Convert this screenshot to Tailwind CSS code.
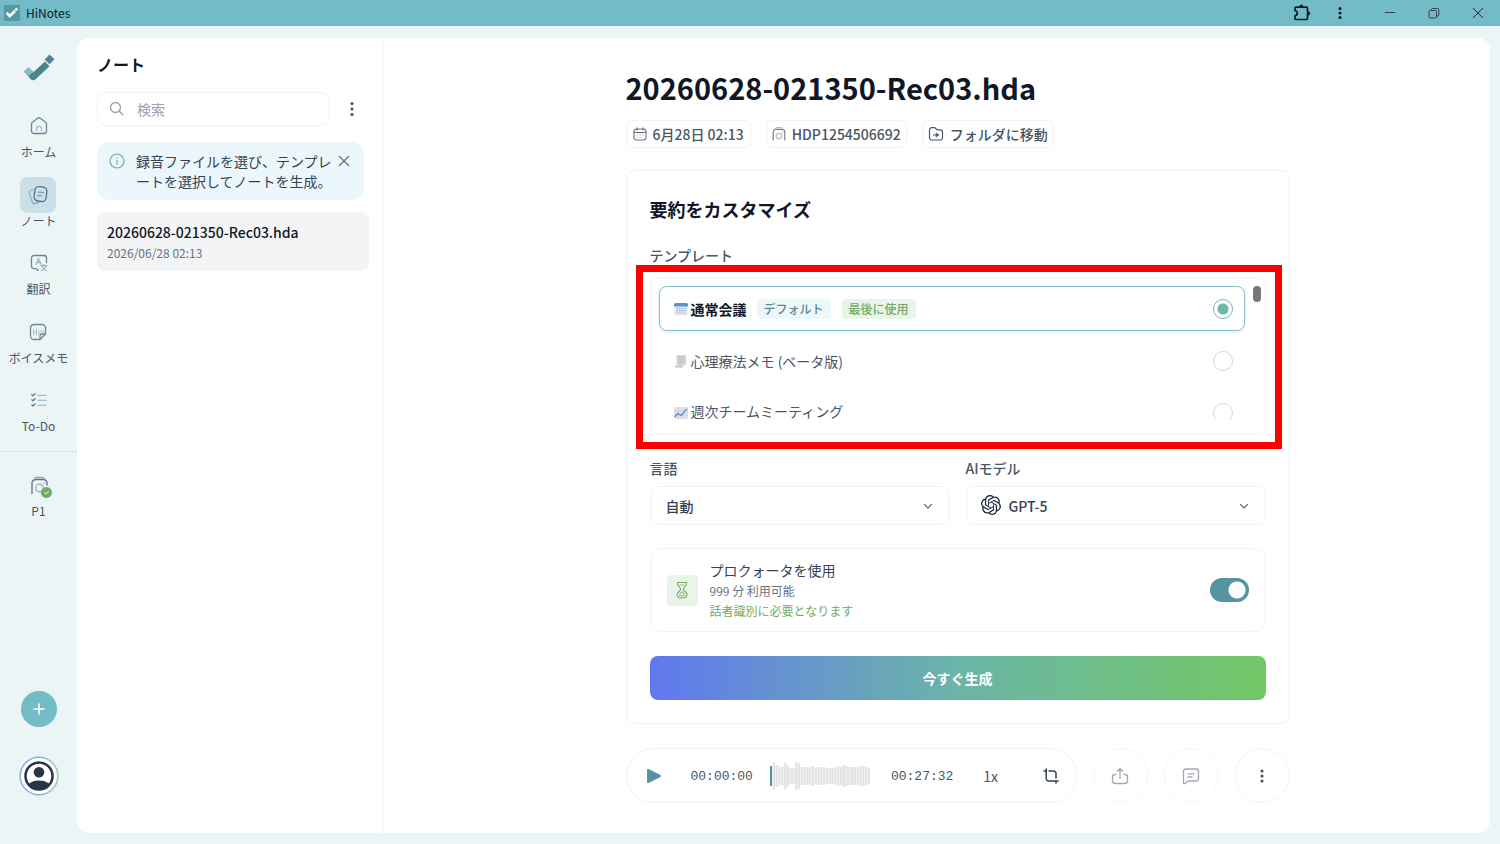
<!DOCTYPE html>
<html lang="ja">
<head>
    <meta charset="UTF-8">
    <meta name="viewport" content="width=device-width, initial-scale=1.0">
    <title>HiNotes</title>
    <script src="https://cdn.jsdelivr.net/npm/@tailwindcss/browser@4"></script>
</head>
<body class="min-h-screen flex flex-col bg-[#ebf5f6] font-['Noto_Sans_CJK_JP',sans-serif] text-sm text-gray-700">
    <!-- Title bar -->
    <header class="h-[26px] shrink-0 bg-[#73bcc7] flex items-center pl-1 pr-3 text-gray-900">
        <svg class="w-4 h-4" viewBox="0 0 16 16"><rect width="16" height="16" rx="1" fill="#5597a4"/><path d="M2.5 7.8l3.300 3.200L11 6" fill="none" stroke="#fff" stroke-width="2.600"/><path d="M11.300 5.300l2-2" stroke="#fff" stroke-width="2.600"/></svg>
        <span class="ml-[6px] text-xs">HiNotes</span>
        <div class="ml-auto flex items-center">
            <button aria-label="拡張機能" class="w-5 h-5 flex items-center justify-center"><svg class="w-5 h-5" viewBox="0 0 20 20" fill="none" stroke="#101828" stroke-width="1.700" stroke-linejoin="round"><path d="M4 4.200h10.500a1 1 0 011 1v10.300a1 1 0 01-1 1H4a1 1 0 01-1-1v-2.700c1.500-.3 2.300-1.200 2.300-2.500S4.500 8 3 7.700V5.200a1 1 0 011-1z"/><path d="M7.700 3.700a1.700 1.700 0 013.400 0zM16 8.700a1.700 1.700 0 010 3.400z" fill="#101828" stroke-width="1"/></svg></button>
            <button aria-label="メニュー" class="ml-[18px] w-5 h-5 flex items-center justify-center"><svg class="w-4 h-4" viewBox="0 0 16 16" fill="#101828"><circle cx="8" cy="3.500" r="1.500"/><circle cx="8" cy="8" r="1.500"/><circle cx="8" cy="12.500" r="1.500"/></svg></button>
            <button aria-label="最小化" class="ml-[30px] w-5 h-5 flex items-center justify-center"><svg class="w-3 h-3" viewBox="0 0 12 12" stroke="#344054"><path d="M1 5.500h10"/></svg></button>
            <button aria-label="元に戻す" class="ml-6 w-5 h-5 flex items-center justify-center"><svg class="w-3 h-3" viewBox="0 0 12 12" fill="none" stroke="#344054"><rect x="1" y="3.500" width="7.500" height="7.500" rx="1"/><path d="M3.500 3.500v-1a1 1 0 011-1H9.500a1.300 1.300 0 011.300 1.300V8a1 1 0 01-1 1H8.500"/></svg></button>
            <button aria-label="閉じる" class="ml-6 w-5 h-5 flex items-center justify-center"><svg class="w-3 h-3" viewBox="0 0 12 12" stroke="#1d2939"><path d="M1 1l10 10M11 1L1 11"/></svg></button>
        </div>
    </header>

    <div class="flex-1 flex">
        <!-- Side rail -->
        <nav class="w-[77px] shrink-0 flex flex-col items-center text-xs leading-4 text-gray-600">
            <svg class="mt-[28px] w-8 h-7" viewBox="0 0 32 28"><path d="M.500 17.500L5.500 13l6 5.500-4.500 6z" fill="#8fb9c2"/><path d="M5.500 21.500L9.500 19 22 7.500l4.500 4.800L13 25a4 4 0 01-5.500 0z" fill="#4d8490"/><path d="M26.500 0.500l5 4.700-5 5-4.800-4.700z" fill="#4d8490"/></svg>
            <a href="#" class="mt-[26px] h-[69px] flex flex-col items-center">
                <span class="w-9 h-9 flex items-center justify-center">
                    <svg class="w-[18px] h-[18px]" viewBox="0 0 18 18" fill="none" stroke="#6b8597" stroke-width="1.300" stroke-linejoin="round" stroke-linecap="round"><path d="M1.500 7.200a2.500 2.500 0 011-2L7.700 1.300a2 2 0 012.600 0l5.200 3.900a2.500 2.500 0 011 2V14a2.500 2.500 0 01-2.500 2.500H4A2.500 2.500 0 011.500 14z"/><path d="M6.500 13.500v-1.700a2.500 2.500 0 015 0v1.700" stroke="#9db9c4"/></svg>
                </span>
                <span>ホーム</span>
            </a>
            <a href="#" class="h-[68px] flex flex-col items-center">
                <span class="w-9 h-9 rounded-lg bg-[#cbe0e6] flex items-center justify-center">
                    <svg class="w-5 h-5" viewBox="0 0 20 20" fill="none" stroke-width="1.300" stroke-linecap="round"><path d="M4.800 4.700L2.500 5.500A2 2 0 001.300 8l2.800 8.700a2.500 2.500 0 003 1.700l3.400-.9" stroke="#8fb0bf"/><rect x="6.500" y="1.800" width="12" height="14.500" rx="4" transform="rotate(7 12.500 9)" stroke="#53718a"/><path d="M10.500 7.200l5 .4M10 10.500l3.500.3" stroke="#7e9dae"/></svg>
                </span>
                <span>ノート</span>
            </a>
            <a href="#" class="h-[69px] flex flex-col items-center">
                <span class="w-9 h-9 flex items-center justify-center">
                    <svg class="w-[18px] h-[18px]" viewBox="0 0 18 18" fill="none" stroke="#6b8597" stroke-width="1.300" stroke-linecap="round" stroke-linejoin="round"><path d="M8 16.500l-1.800-1.800H4A2.500 2.500 0 011.500 12V4A2.500 2.500 0 014 1.500h10A2.500 2.500 0 0116.500 4v4.500"/><path d="M6 10.500l2.500-6 2.500 6M7 8.500h3" stroke="#9db9c4"/><path d="M11 11.800h6M14 10.500v1.300M12 12c.7 2 2.500 4 4.500 4.700M16 12c-.7 2-2.500 4-4.500 4.700" stroke="#8aa5b3" stroke-width="1"/></svg>
                </span>
                <span>翻訳</span>
            </a>
            <a href="#" class="h-[68px] flex flex-col items-center">
                <span class="w-9 h-9 flex items-center justify-center">
                    <svg class="w-[18px] h-[18px]" viewBox="0 0 18 18" fill="none" stroke="#6b8597" stroke-width="1.300" stroke-linecap="round" stroke-linejoin="round"><path d="M16.500 11V5A3.500 3.500 0 0013 1.500H5A3.500 3.500 0 001.500 5v8A3.500 3.500 0 005 16.500h6z"/><path d="M11 16.500V13a2 2 0 012-2h3.500"/><path d="M4.500 6v6M4.500 9h3M7.500 6v6M9.800 7.500v4M12 7v2.500M14 7.500v1.500" stroke="#a5c0ca" stroke-width="1"/></svg>
                </span>
                <span>ボイスメモ</span>
            </a>
            <a href="#" class="h-[69px] flex flex-col items-center">
                <span class="w-9 h-9 flex items-center justify-center">
                    <svg class="w-4 h-4" viewBox="0 0 16 16" fill="none" stroke-width="1.300" stroke-linecap="round" stroke-linejoin="round"><path d="M.8 2.800l1.200 1 2-2M.8 7.800l1.200 1 2-2M.8 13l1.200 1 2-2" stroke="#5c7890"/><path d="M7 3.300h8M7 8.300h8M7 13.300h8" stroke="#a5c0ca"/></svg>
                </span>
                <span>To-Do</span>
            </a>
            <div class="w-full border-t border-[#d0e5e6]"></div>
            <a href="#" class="mt-4 flex flex-col items-center">
                <span class="relative w-9 h-9 flex items-center justify-center">
                    <svg class="w-5 h-5" viewBox="0 0 20 20" fill="none" stroke="#667085" stroke-width="1.300" stroke-linecap="round"><path d="M3 17.500V7a3.500 3.500 0 013.500-3.500h8A3.500 3.500 0 0118 7v2"/><path d="M5.500 3.300a2 2 0 012-1.800h6a2 2 0 012 1.800" stroke="#98a2b3"/><circle cx="10.500" cy="12" r="3.800" stroke="#98b3bd"/><circle cx="15" cy="7" r=".8" fill="#98b3bd" stroke="none"/></svg>
                    <svg class="absolute right-[5px] bottom-[6px] w-[11px] h-[11px]" viewBox="0 0 11 11"><circle cx="5.500" cy="5.500" r="5.500" fill="#73aa64"/><path d="M3.500 5.600l1.500 1.400 2.600-2.800" fill="none" stroke="#e8f5e4" stroke-linecap="round"/></svg>
                </span>
                <span class="leading-[14px]">P1</span>
            </a>
            <button aria-label="追加" class="mt-auto w-9 h-9 rounded-full bg-[#73bcc7] flex items-center justify-center">
                <svg class="w-3 h-3" viewBox="0 0 12 12" stroke="#fff" stroke-width="1.500" stroke-linecap="round"><path d="M6 1v10M1 6h10"/></svg>
            </button>
            <button aria-label="アカウント" class="mt-[29px] mb-12 w-10 h-10">
                <svg class="w-10 h-10" viewBox="0 0 40 40">
                    <defs>
                        <linearGradient id="ring" x1="0" y1="0" x2="1" y2="0"><stop offset="0" stop-color="#8cb4e0"/><stop offset=".5" stop-color="#79bccb"/><stop offset="1" stop-color="#9ccf9f"/></linearGradient>
                        <clipPath id="face"><circle cx="20" cy="20" r="13.500"/></clipPath>
                    </defs>
                    <circle cx="20" cy="20" r="18.800" fill="#fff" stroke="url(#ring)" stroke-width="1.600"/>
                    <circle cx="20" cy="20" r="13.500" fill="#fff" stroke="#27344a" stroke-width="2.500"/>
                    <g clip-path="url(#face)" fill="#27344a"><circle cx="20" cy="16.300" r="5.300"/><ellipse cx="20" cy="33" rx="13" ry="8.500"/></g>
                </svg>
            </button>
        </nav>

        <div class="flex-1 flex mt-3 mr-[10px] mb-[11px] bg-white rounded-xl">
            <!-- Note list -->
            <aside class="w-[306px] shrink-0 border-r border-[#eef4f5] pl-5 pr-[13px] pt-[14px]">
                <h2 class="text-base leading-6 font-bold text-gray-900">ノート</h2>
                <div class="mt-4 flex items-center">
                    <div class="w-[233px] h-[34px] border border-[#f0f4f5] rounded-lg flex items-center pl-[11px]">
                        <svg class="w-4 h-4 shrink-0" viewBox="0 0 16 16" fill="none" stroke="#98a2a9" stroke-width="1.300" stroke-linecap="round"><circle cx="6.500" cy="6.500" r="5"/><path d="M10.300 10.300L14 14"/></svg>
                        <input type="text" aria-label="検索" placeholder="検索" class="ml-3 w-full bg-transparent outline-none text-sm placeholder:text-gray-400">
                    </div>
                    <button aria-label="その他" class="ml-3 w-5 h-5 flex items-center justify-center"><svg class="w-4 h-4" viewBox="0 0 16 16" fill="#475467"><circle cx="8" cy="2.500" r="1.600"/><circle cx="8" cy="8" r="1.600"/><circle cx="8" cy="13.500" r="1.600"/></svg></button>
                </div>
                <div class="mt-4 w-[267px] rounded-xl bg-[#ebf7fa] flex pl-3 pt-[9px] pb-[9px]">
                    <svg class="w-4 h-4 mt-[2px] shrink-0" viewBox="0 0 16 16" fill="none" stroke="#6aaab8" stroke-width="1.200" stroke-linecap="round"><circle cx="8" cy="8" r="7"/><path d="M8 7.300v4M8 4.800v.1"/></svg>
                    <p class="ml-[11px] text-sm leading-5 text-gray-700 whitespace-nowrap">録音ファイルを選び、テンプレ<br>ートを選択してノートを生成。</p>
                    <button aria-label="閉じる" class="ml-[6px] mt-1 w-3 h-3 shrink-0"><svg class="w-3 h-3" viewBox="0 0 12 12" stroke="#667085" stroke-width="1.300" stroke-linecap="round"><path d="M1.500 1.500l9 9M10.500 1.500l-9 9"/></svg></button>
                </div>
                <a href="#" class="mt-3 block rounded-lg bg-[#f3f4f6] px-[10px] pt-[9px] pb-2">
                    <span class="block text-sm leading-[22px] font-medium text-gray-900">20260628-021350-Rec03.hda</span>
                    <span class="block text-xs leading-5 text-gray-500">2026/06/28 02:13</span>
                </a>
            </aside>

            <main class="flex-1 pl-[42px]">
                <div class="mx-auto w-full max-w-[664px]">
                    <h1 class="pt-[27px] text-[29px] leading-[44px] font-bold text-gray-900">20260628-021350-Rec03.hda</h1>
                    <div class="mt-[11px] flex gap-[15px] font-medium text-gray-600">
                        <span class="h-7 px-[6px] border border-[#f0f4f5] rounded-md flex items-center gap-[6px]">
                            <svg class="w-[14px] h-[14px]" viewBox="0 0 14 14" fill="none" stroke="#6b7280" stroke-width="1.100" stroke-linecap="round"><rect x="1" y="2" width="12" height="11" rx="2.500"/><path d="M4 .8v2.400M10 .8v2.400M1 5.500h12"/><path d="M4 8h.1M7 8h.1M10 8h.1M4 10.500h.1M7 10.500h.1" stroke="#9ca3af"/></svg>
                            6月28日 02:13
                        </span>
                        <span class="h-7 px-[5px] border border-[#f0f4f5] rounded-md flex items-center gap-[6px]">
                            <svg class="w-[14px] h-[14px]" viewBox="0 0 14 14" fill="none" stroke="#6b7280" stroke-width="1.100" stroke-linecap="round"><path d="M1.200 13V5A2.500 2.500 0 013.700 2.500h6.600A2.500 2.500 0 0112.800 5v8"/><path d="M3.500 2.300a1.500 1.500 0 011.500-1.500h4a1.500 1.500 0 011.500 1.500" stroke="#9ca3af"/><circle cx="7" cy="9" r="2.800" stroke="#b3bac3"/><path d="M10.500 5v.1" stroke="#9ca3af"/></svg>
                            HDP1254506692
                        </span>
                        <button class="h-7 px-[5px] border border-[#f0f4f5] rounded-md flex items-center gap-[6px]">
                            <svg class="w-4 h-4" viewBox="0 0 16 16" fill="none" stroke="#4b5563" stroke-width="1.200" stroke-linecap="round" stroke-linejoin="round"><path d="M1.500 4A2.300 2.300 0 013.800 1.700h2.400a2 2 0 011.500.7l.6.700a2 2 0 001.500.7h2.400A2.300 2.300 0 0114.500 6v5.700a2.300 2.300 0 01-2.300 2.300H3.800a2.300 2.300 0 01-2.300-2.300z"/><path d="M5.500 9h5"/><path d="M8.300 7l2.400 2-2.400 2z" fill="#4b5563" stroke-width=".6"/></svg>
                            フォルダに移動
                        </button>
                    </div>

                    <!-- Summary card -->
                    <form class="mt-[22px] border border-[#f0f4f5] rounded-lg px-[23px] pt-6 pb-[23px]">
                        <h2 class="text-lg leading-7 font-bold text-gray-900">要約をカスタマイズ</h2>
                        <h3 class="mt-[22px] text-sm leading-5 font-medium text-gray-600">テンプレート</h3>
                        <div class="relative mt-3 border border-[#f0f4f5] rounded-lg pt-[7px] pb-[14px] pl-[7px] pr-[19px]">
                            <div class="h-[135px] overflow-hidden p-[1px]">
                                <label class="h-[45px] border border-[#8dbfc9] rounded-lg shadow-[0_1px_3px_1px_#e4f3f6] flex items-center pl-[13px] pr-[11px]">
                                    <svg class="w-4 h-4" viewBox="0 0 16 16"><rect x="1.500" y="3" width="13" height="11.500" rx="1" fill="#e3e8ee"/><path d="M1 5.500V3.500A1.500 1.500 0 012.500 2h11A1.500 1.500 0 0115 3.500v2z" fill="#5b94cc"/><path d="M3.500 7.500h9M3.500 9.700h9M3.500 12h9" stroke="#9fb2c8" stroke-width="1.200" stroke-dasharray="1.500 1"/></svg>
                                    <span class="ml-[2px] leading-5 font-bold text-gray-900">通常会議</span>
                                    <span class="ml-[10px] h-5 px-[7px] rounded bg-[#ebf7fa] text-xs leading-5 font-medium text-[#5b8698]">デフォルト</span>
                                    <span class="ml-[11px] h-5 px-[7px] rounded bg-[#eaf5e9] text-xs leading-5 font-medium text-[#73aa64]">最後に使用</span>
                                    <input type="radio" name="template" checked class="appearance-none ml-auto w-5 h-5 rounded-full border border-[#6db8a6] bg-[radial-gradient(circle,#6db8a6_5px,white_6px)]">
                                </label>
                                <label class="mt-2 h-11 border border-transparent flex items-center pl-[13px] pr-[11px]">
                                    <svg class="w-4 h-4" viewBox="0 0 16 16"><path d="M3.500 2h9.500v10H3.500z" fill="#d2d3d8"/><path d="M5.500 4h5.500M5.500 6h5.500M5.500 8h5.500M5.500 10h4" stroke="#b7b9c0" stroke-width=".8"/><path d="M2 12.500h8.500a2 2 0 01-1 2H3.500a1.500 1.500 0 01-1.500-2z" fill="#bfc0c7"/></svg>
                                    <span class="ml-[2px] leading-5 text-gray-600">心理療法メモ (ベータ版)</span>
                                    <input type="radio" name="template" class="appearance-none ml-auto w-5 h-5 rounded-full border border-gray-300">
                                </label>
                                <label class="mt-2 h-11 border border-transparent flex items-center pl-[13px] pr-[11px]">
                                    <svg class="w-4 h-4" viewBox="0 0 16 16"><rect x="1" y="2" width="14" height="12" rx="1" fill="#dfe2e7"/><path d="M1 6h14M1 10h14M5.500 2v12M10.500 2v12" stroke="#cbd0d8" stroke-width=".7"/><path d="M1.500 12l3.500-3.500 3 2 6-6.500" fill="none" stroke="#5c9bd0" stroke-width="1.400"/></svg>
                                    <span class="ml-[2px] pb-1 leading-4 text-gray-600">週次チームミーティング</span>
                                    <input type="radio" name="template" class="appearance-none ml-auto w-5 h-5 rounded-full border border-gray-300">
                                </label>
                            </div>
                            <div class="absolute right-1 top-[8px] w-2 h-4 rounded-full bg-[#79757c]"></div>
                            <div class="absolute -left-[15px] -right-[17px] -top-[13px] -bottom-[15px] border-[7px] border-[#ff0000] pointer-events-none"></div>
                        </div>

                        <div class="mt-[23px] grid grid-cols-2 gap-4">
                            <div>
                                <label for="lang" class="block leading-5 font-medium text-gray-600">言語</label>
                                <div class="relative mt-2">
                                    <select id="lang" class="appearance-none w-full h-[39px] pl-[15px] border border-[#f0f4f5] rounded-lg font-medium text-gray-700">
                                        <option>自動</option>
                                    </select>
                                    <svg class="absolute right-4 top-[14px] w-3 h-3 pointer-events-none" viewBox="0 0 12 12" fill="none" stroke="#667085" stroke-width="1.300" stroke-linecap="round" stroke-linejoin="round"><path d="M2.500 4.500L6 8l3.500-3.500"/></svg>
                                </div>
                            </div>
                            <div>
                                <label for="model" class="block leading-5 font-medium text-gray-600">AIモデル</label>
                                <div class="relative mt-2">
                                    <svg class="absolute left-[15px] top-[9px] w-5 h-5 pointer-events-none" viewBox="0 0 24 24" fill="#1f2937"><path d="M22.2819 9.8211a5.9847 5.9847 0 0 0-.5157-4.9108 6.0462 6.0462 0 0 0-6.5098-2.9A6.0651 6.0651 0 0 0 4.9807 4.1818a5.9847 5.9847 0 0 0-3.9977 2.9 6.0462 6.0462 0 0 0 .7427 7.0966 5.98 5.98 0 0 0 .511 4.9107 6.051 6.051 0 0 0 6.5146 2.9001A5.9847 5.9847 0 0 0 13.2599 24a6.0557 6.0557 0 0 0 5.7718-4.2058 5.9894 5.9894 0 0 0 3.9977-2.9001 6.0557 6.0557 0 0 0-.7475-7.0729zm-9.022 12.6081a4.4755 4.4755 0 0 1-2.8764-1.0408l.1419-.0804 4.7783-2.7582a.7948.7948 0 0 0 .3927-.6813v-6.7369l2.02 1.1686a.071.071 0 0 1 .038.0615v5.5826a4.504 4.504 0 0 1-4.4945 4.4849zm-9.6607-4.1254a4.4708 4.4708 0 0 1-.5346-3.0137l.142.0852 4.783 2.7582a.7712.7712 0 0 0 .7806 0l5.8428-3.3685v2.3324a.0804.0804 0 0 1-.0332.0615L9.74 19.9502a4.4992 4.4992 0 0 1-6.1408-1.6464zM2.3408 7.8956a4.485 4.485 0 0 1 2.3655-1.9728V11.6a.7664.7664 0 0 0 .3879.6765l5.8144 3.3543-2.0201 1.1685a.0757.0757 0 0 1-.071 0l-4.8303-2.7865A4.504 4.504 0 0 1 2.3408 7.872zm16.5963 3.8558L13.1038 8.364 15.1192 7.2a.0757.0757 0 0 1 .071 0l4.8303 2.7913a4.4944 4.4944 0 0 1-.6765 8.1042v-5.6772a.79.79 0 0 0-.407-.667zm2.0107-3.0231l-.142-.0852-4.7735-2.7818a.7759.7759 0 0 0-.7854 0L9.409 9.2297V6.8974a.0662.0662 0 0 1 .0284-.0615l4.8303-2.7866a4.4992 4.4992 0 0 1 6.6802 4.66zM8.3065 12.863l-2.02-1.1638a.0804.0804 0 0 1-.038-.0567V6.0742a4.4992 4.4992 0 0 1 7.3757-3.4537l-.142.0805L8.704 5.459a.7948.7948 0 0 0-.3927.6813zm1.0976-2.3654l2.602-1.4998 2.6069 1.4998v2.9994l-2.5974 1.4997-2.6067-1.4997Z"/></svg>
                                    <select id="model" class="appearance-none w-full h-[39px] pl-[42px] border border-[#f0f4f5] rounded-lg font-medium text-gray-700">
                                        <option>GPT-5</option>
                                    </select>
                                    <svg class="absolute right-4 top-[14px] w-3 h-3 pointer-events-none" viewBox="0 0 12 12" fill="none" stroke="#667085" stroke-width="1.300" stroke-linecap="round" stroke-linejoin="round"><path d="M2.500 4.500L6 8l3.500-3.500"/></svg>
                                </div>
                            </div>
                        </div>

                        <div class="mt-[23px] h-[84px] border border-[#f0f4f5] rounded-xl px-4 flex items-center">
                            <span class="w-[31px] h-[31px] rounded bg-[#eaf5e9] flex items-center justify-center">
                                <svg class="w-[18px] h-[18px]" viewBox="0 0 18 18" fill="none" stroke="#73aa64" stroke-width="1.100" stroke-linejoin="round" stroke-linecap="round"><path d="M5.500 1.500h7a1.300 1.300 0 011 2L10.500 7.500c-.4.600-.3 1 .1 1.400l2.700 3a2.900 2.900 0 01-2.200 4.800H6.900a2.900 2.900 0 01-2.200-4.800l2.700-3c.4-.4.5-.8.1-1.400L4.500 3.500a1.300 1.300 0 011-2z"/><path d="M9 10.500l2.300 2.800a.9.9 0 01-.7 1.500H7.400a.9.9 0 01-.7-1.500z" stroke="#93c187"/><path d="M7 4h4" stroke="#93c187"/></svg>
                            </span>
                            <label for="quota" class="ml-3">
                                <span class="block text-sm leading-[22px] text-gray-700">プロクォータを使用</span>
                                <span class="block text-xs leading-5 text-gray-500">999 分 利用可能</span>
                                <span class="block text-xs leading-5 text-[#73aa64]">話者識別に必要となります</span>
                            </label>
                            <input id="quota" type="checkbox" role="switch" checked class="appearance-none ml-auto w-[39px] h-6 rounded-full bg-[#5794a3] bg-[radial-gradient(circle_at_27px_12px,white_8px,transparent_9px)]">
                        </div>

                        <button type="button" class="mt-6 w-full h-11 rounded-lg bg-[linear-gradient(90deg,#6178f0,#6bb5a7_50%,#72c865)] text-sm font-bold text-white">今すぐ生成</button>
                    </form>

                    <!-- Player -->
                    <div class="mt-6 flex gap-4">
                        <div class="flex-1 h-[55px] border border-[#f0f4f5] rounded-full flex items-center pl-[19px]">
                            <button aria-label="再生" class="w-4 h-4"><svg class="w-4 h-4" viewBox="0 0 16 16" fill="#5794a3" stroke="#5794a3" stroke-width="2" stroke-linejoin="round"><path d="M2 2v12l12-6z"/></svg></button>
                            <span class="ml-[29px] pt-[3px] font-['Liberation_Mono',monospace] text-[13px] text-gray-600">00:00:00</span>
                            <svg class="ml-[17px] w-[101px] h-7" viewBox="0 0 101 28" fill="none"><path id="wave" stroke="#e3e4e6" stroke-width="2.400"/><path d="M1 4v20" stroke="#5794a3" stroke-width="2"/></svg>
                            <span class="ml-5 pt-[3px] font-['Liberation_Mono',monospace] text-[13px] text-gray-600">00:27:32</span>
                            <button class="ml-[30px] text-sm text-gray-600">1x</button>
                            <button aria-label="切り取り" class="ml-auto mr-[17px] w-4 h-4"><svg class="w-4 h-4" viewBox="0 0 16 16" fill="none" stroke="#344054" stroke-width="1.500" stroke-linecap="round" stroke-linejoin="round"><path d="M1 3h2.500M3.200 1v9.500a2.500 2.500 0 002.500 2.500H15M6 3h4.500A2.500 2.500 0 0113 5.500V10M13 13v2"/></svg></button>
                        </div>
                        <button aria-label="共有" class="w-[55px] h-[55px] border border-[#f0f9fa] rounded-full flex items-center justify-center"><svg class="w-[18px] h-[18px]" viewBox="0 0 18 18" fill="none" stroke="#a3a9b2" stroke-width="1.300" stroke-linecap="round" stroke-linejoin="round"><path d="M5 7.500H3.800A2.300 2.300 0 001.500 9.800v4A2.700 2.700 0 004.200 16.500h9.600a2.700 2.700 0 002.700-2.700v-4a2.300 2.300 0 00-2.300-2.300H13"/><path d="M9 11.500V1.500M6.500 4L9 1.500 11.500 4"/></svg></button>
                        <button aria-label="コメント" class="w-[55px] h-[55px] border border-[#f0f9fa] rounded-full flex items-center justify-center"><svg class="w-[18px] h-[18px]" viewBox="0 0 18 18" fill="none" stroke="#a3a9b2" stroke-width="1.300" stroke-linecap="round" stroke-linejoin="round"><path d="M1.500 4.500A2.500 2.500 0 014 2h10a2.500 2.500 0 012.500 2.500v7A2.500 2.500 0 0114 14H6l-3 2.500c-.8.500-1.500.2-1.500-.7z"/><path d="M6 6.800h6M6 10h4"/></svg></button>
                        <button aria-label="その他" class="w-[55px] h-[55px] border border-[#f0f4f5] rounded-full flex items-center justify-center"><svg class="w-4 h-4" viewBox="0 0 16 16" fill="#475467"><circle cx="8" cy="3" r="1.600"/><circle cx="8" cy="8" r="1.600"/><circle cx="8" cy="13" r="1.600"/></svg></button>
                    </div>
                </div>
            </main>
        </div>
    </div>
    <script>
        // waveform bars, heights in px
        const levels = [20, 28, 22, 18, 18, 26, 22, 16, 16, 28, 26, 18, 18, 18, 18, 20, 16, 18, 18, 18, 16, 16, 16, 18, 20, 18, 22, 20, 18, 18, 18, 18, 20, 20, 18, 16];
        const d = levels.map((h, i) => `M${1 + i * 2.8} ${14 - h / 2}v${h}`).join('');
        document.getElementById('wave').setAttribute('d', d);
    </script>
</body>
</html>
